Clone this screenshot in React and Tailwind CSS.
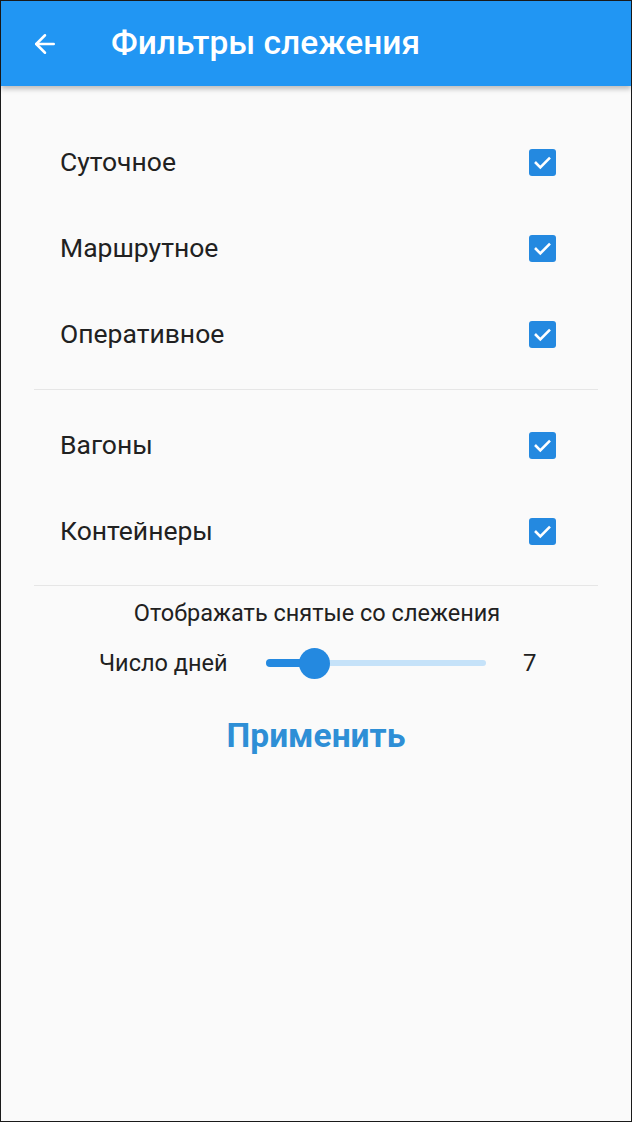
import { ArrowLeft } from "lucide-react";

const font = { fontFamily: "Roboto, 'Noto Sans', sans-serif" };

function Check() {
  return (
    <div className="w-[27px] h-[27px] rounded-[3px] bg-[#2489e0] flex items-center justify-center">
      <svg width="21" height="21" viewBox="0 0 24 24" fill="none" stroke="white" strokeWidth="3" strokeLinecap="square">
        <path d="M4.5 12.5l5 5 10-10" />
      </svg>
    </div>
  );
}

function Row({ label }) {
  return (
    <div className="h-[86px] flex items-center justify-between pl-[59px] pr-[75px]">
      <span className="text-[26.5px] text-[#212121]">{label}</span>
      <Check />
    </div>
  );
}

export default function App() {
  return (
    <div className="w-[632px] h-[1122px] border border-[#1a1a1a] bg-[#fafafa] flex flex-col" style={font}>
      <header className="h-[85px] bg-[#2196f3] flex items-center shadow-[0_3px_5px_rgba(0,0,0,0.25)] shrink-0">
        <ArrowLeft className="ml-[29px] text-white" size={30} strokeWidth={2} />
        <h1 className="ml-[51px] text-white text-[33.5px] font-medium">Фильтры слежения</h1>
      </header>
      <div className="pt-[33px]">
        <Row label="Суточное" />
        <Row label="Маршрутное" />
        <Row label="Оперативное" />
      </div>
      <div className="mx-[33px] mt-[12px] h-px bg-[#e6e6e6]" />
      <div className="pt-[12px]">
        <Row label="Вагоны" />
        <Row label="Контейнеры" />
      </div>
      <div className="mx-[33px] mt-[11px] h-px bg-[#e6e6e6]" />
      <p className="mt-[10px] text-center text-[23.5px] text-[#212121] pl-[2px]">Отображать снятые со слежения</p>
      <div className="mt-[14px] flex items-center h-[36px]">
        <span className="ml-[98px] text-[23.5px] text-[#212121] w-[167px]">Число дней</span>
        <div className="relative w-[220px] h-[36px] flex items-center">
          <div className="w-full h-[6px] rounded-full bg-[#c5e2f9]" />
          <div className="absolute left-0 h-[8px] w-[50px] rounded-full bg-[#2489e0]" />
          <div className="absolute left-[33px] w-[31px] h-[31px] rounded-full bg-[#2489e0]" />
        </div>
        <span className="ml-[37px] text-[24px] text-[#212121]">7</span>
      </div>
      <button className="mt-[30px] mx-auto text-[33.5px] font-bold text-[#2e8fd6]">Применить</button>
    </div>
  );
}
